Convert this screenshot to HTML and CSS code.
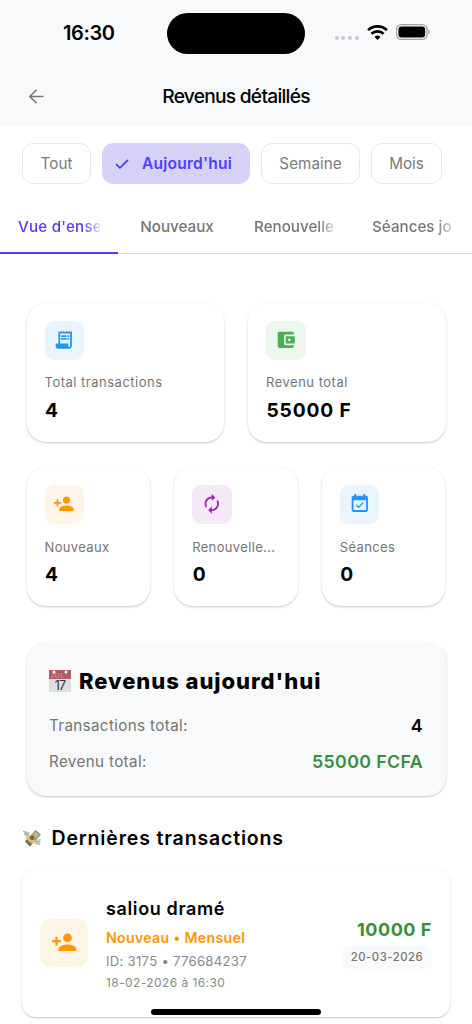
FILE: index.html
```html
<!DOCTYPE html>
<html lang="fr">
<head>
<meta charset="utf-8">
<title>Revenus détaillés</title>
<link rel="stylesheet" href="styles.css">
</head>
<body>
<svg class="defs" width="0" height="0">
  <symbol id="person-add" viewBox="0 0 24 24"><path d="M15 12c2.21 0 4-1.79 4-4s-1.79-4-4-4-4 1.79-4 4 1.79 4 4 4zm-9-2V7H4v3H1v2h3v3h2v-3h3v-2H6zm9 4c-2.67 0-8 1.34-8 4v2h16v-2c0-2.66-5.33-4-8-4z"/></symbol>
</svg>
<div class="screen">
  <header class="header">
    <div class="status">
      <span class="time">16:30</span>
      <span class="island"></span>
      <span class="signals">
        <span class="dots"><i></i><i></i><i></i><i></i></span>
        <svg class="wifi" viewBox="0 0 21 15"><path d="M10.500 15.000l3.000-3.100a4.300 4.300 0 0 0-6.000 0z"/><path class="arc" d="M1.100 5.100a13.500 13.500 0 0 1 18.800 0M4.400 8.800a8.800 8.800 0 0 1 12.200 0"/></svg>
        <svg class="battery" viewBox="0 0 34 16"><rect x=".6" y=".6" width="30.400" height="14.800" rx="4.800" fill="none" stroke="#a3a3a6" stroke-width="1.200"/><rect x="2.400" y="2.500" width="26.800" height="11" rx="3.200"/><path d="M32.200 5.500c2 .6 2 4.400 0 5z" fill="#a3a3a6"/></svg>
      </span>
    </div>
    <div class="appbar">
      <svg class="back" viewBox="0 0 15 15"><path d="M14.500 7.500H1M7.500 .8L.9 7.500l6.600 6.700"/></svg>
      <h1 class="title">Revenus détaillés</h1>
    </div>
  </header>

  <nav class="chips">
    <span class="chip tout">Tout</span>
    <span class="chip active"><svg viewBox="0 0 14 10"><path d="M1 5.200l3.900 3.600L13 1"/></svg><b>Aujourd'hui</b></span>
    <span class="chip semaine">Semaine</span>
    <span class="chip mois">Mois</span>
  </nav>

  <nav class="tabs">
    <span class="tab selected"><span class="fade">Vue d'ense</span></span>
    <span class="tab"><span class="center">Nouveaux</span></span>
    <span class="tab"><span class="fade">Renouvelle</span></span>
    <span class="tab"><span class="fade">Séances jo</span></span>
  </nav>

  <main>
    <section class="grid two">
      <article class="card stat">
        <span class="badge blue"><svg viewBox="0 0 24 24"><path d="M19.500 3.500L18 2l-1.500 1.500L15 2l-1.500 1.500L12 2l-1.500 1.500L9 2 7.500 3.500 6 2v14H3v3c0 1.660 1.340 3 3 3h12c1.660 0 3-1.340 3-3V2l-1.500 1.500zM19 19c0 .55-.45 1-1 1s-1-.45-1-1v-3H8V5h11v14z"/><path d="M9 7h6v2H9zM16 7h2v2h-2zM9 10h6v2H9zM16 10h2v2h-2z"/></svg></span>
        <span class="label">Total transactions</span><strong class="value">4</strong>
      </article>
      <article class="card stat">
        <span class="badge green"><svg viewBox="0 0 24 24"><path d="M21 18v1c0 1.100-.9 2-2 2H5c-1.110 0-2-.9-2-2V5c0-1.100.89-2 2-2h14c1.100 0 2 .9 2 2v1h-9c-1.110 0-2 .9-2 2v8c0 1.100.89 2 2 2h9zm-9-2h10V8H12v8zm4-2.500c-.83 0-1.500-.67-1.500-1.500s.67-1.500 1.500-1.500 1.500.67 1.500 1.500-.67 1.500-1.500 1.500z"/></svg></span>
        <span class="label">Revenu total</span><strong class="value">55000 F</strong>
      </article>
    </section>
    <section class="grid three">
      <article class="card stat">
        <span class="badge orange"><svg><use href="#person-add"/></svg></span>
        <span class="label">Nouveaux</span><strong class="value">4</strong>
      </article>
      <article class="card stat">
        <span class="badge purple"><svg viewBox="0 0 24 24"><path d="M12 6v3l4-4-4-4v3c-4.420 0-8 3.580-8 8 0 1.570.46 3.030 1.240 4.260L6.700 14.800c-.45-.83-.7-1.790-.7-2.800 0-3.310 2.690-6 6-6zm6.760 1.740L17.300 9.200c.44.84.7 1.790.7 2.800 0 3.310-2.690 6-6 6v-3l-4 4 4 4v-3c4.420 0 8-3.580 8-8 0-1.570-.46-3.030-1.240-4.260z"/></svg></span>
        <span class="label">Renouvelle...</span><strong class="value">0</strong>
      </article>
      <article class="card stat">
        <span class="badge blue"><svg viewBox="0 0 24 24"><path d="M16.530 11.060L15.470 10l-4.880 4.880-2.120-2.120-1.060 1.060L10.590 17l5.940-5.940zM19 3h-1V1h-2v2H8V1H6v2H5c-1.110 0-1.990.9-1.990 2L3 19c0 1.100.89 2 2 2h14c1.100 0 2-.9 2-2V5c0-1.100-.9-2-2-2zm0 16H5V8h14v11z"/></svg></span>
        <span class="label">Séances</span><strong class="value">0</strong>
      </article>
    </section>

    <section class="card summary">
      <h2><svg class="calendar" viewBox="0 0 22 22"><path d="M0 0h22v22H0z" fill="#dededf"/><path d="M0 0h22v9H0z" fill="#b05c5f"/><circle cx="5" cy="2" r="1.500" fill="#fff"/><circle cx="17" cy="2" r="1.500" fill="#fff"/><text x="1.500" y="8" font-size="6" fill="#dda6a8">JUL</text><text x="11" y="20" font-size="12.500" text-anchor="middle" fill="#333" letter-spacing="-.8">17</text></svg><span>Revenus aujourd'hui</span></h2>
      <div class="line"><span>Transactions total:</span><b>4</b></div>
      <div class="line"><span class="rev">Revenu total:</span><b class="money">55000 FCFA</b></div>
    </section>

    <h2 class="section-title"><svg class="cash" viewBox="0 0 20 18"><path d="M1 1.500l7 2-1 5-4-1zM12 10l7 0-1 6-5-1z" fill="#d2d3c9"/><path d="M1 2l6 3M2 4.500l5 2M13 12l5 1M13 14l4 1.500" stroke="#999d92" stroke-width=".8"/><path d="M3 12.500L13.500 1l5.500 4.500L8 17.500z" fill="#8b9274"/><path d="M4.800 12.400L13.500 2.700l3.600 2.900-9 10z" fill="#b6bb9d"/><path d="M6.500 6.500l7 5.500-3 3.300-6.800-5.700z" fill="#e5bd61"/><ellipse cx="10.200" cy="8.800" rx="2.400" ry="2.200" fill="#716d44"/><path d="M3 12.500l5 5 2-2.200-5-4.800z" fill="#6f765f"/></svg><span>Dernières transactions</span></h2>

    <article class="card transaction">
      <span class="badge orange big"><svg><use href="#person-add"/></svg></span>
      <div class="details">
        <strong class="name">saliou dramé</strong>
        <span class="kind">Nouveau • Mensuel</span>
        <span class="ident">ID: 3175 • 776684237</span>
        <span class="date">18-02-2026 à 16:30</span>
      </div>
      <div class="amount"><strong>10000 F</strong><span class="due">20-03-2026</span></div>
    </article>
  </main>
  <div class="home-indicator"></div>
</div>
</body>
</html>
```
FILE: styles.css
```css
* { box-sizing: border-box; }
body { margin: 0; background: #fff; font-family: Inter, "Noto Sans", sans-serif; color: #000; }
h1, h2 { margin: 0; }
.defs { position: absolute; }
.screen { position: relative; width: 472px; height: 1024px; overflow: hidden; }
.screen span, .screen strong, .screen b { white-space: nowrap; }

.header { height: 126px; background: #f8f9fb; }
.status { height: 66px; display: grid; grid-template-columns: 167px 138px 167px; align-items: center; }
.time { padding-left: 63px; font-size: 20px; font-weight: 600; letter-spacing: -.4px; }
.island { height: 41px; border-radius: 21px; background: #000; }
.signals { display: flex; align-items: center; padding-left: 29.500px; height: 30px; margin-top: -2px; }
.dots { display: flex; gap: 2.700px; margin: 11px 8px 0 0; }
.dots i { width: 4px; height: 4px; border-radius: 50%; background: #c9cacd; }
.wifi { width: 21px; height: 15px; margin-right: 8px; }
.wifi .arc { fill: none; stroke: #000; stroke-width: 2.700; }
.battery { width: 34px; height: 16px; }
.appbar { height: 60px; display: grid; grid-template-columns: 28px 416px 28px; align-items: center; }
.back { width: 15px; height: 15px; grid-column: 2; grid-row: 1; margin-left: 1px; }
.back path { fill: none; stroke: #757575; stroke-width: 1.600; }
.title { grid-column: 2; grid-row: 1; text-align: center; font-size: 19.200px; font-weight: 450; letter-spacing: -.75px; }

.chips { display: flex; gap: 11px; padding: 17px 22px 0; height: 76px; }
.chip { height: 41px; border: 1px solid #e8e8e8; border-radius: 11px; display: flex; align-items: center; justify-content: center; font-size: 15.200px; color: #7a7a7a; letter-spacing: .05px; }
.tout { width: 69px; }
.semaine { width: 99px; }
.mois { width: 71px; }
.active { width: 148px; border-color: #d6d1f7; background: #d6d1f7; color: #4f3dff; justify-content: flex-start; padding-left: 12px; gap: 13px; font-size: 15.600px; letter-spacing: .2px; }
.active svg { width: 14px; height: 10px; }
.active path { fill: none; stroke: #4f3dff; stroke-width: 1.800; }
.active b { font-weight: 600; }

.tabs { display: grid; grid-template-columns: repeat(4, 118px); height: 52px; border-bottom: 1px solid #dcdcdc; font-size: 15.200px; font-weight: 500; color: #757575; letter-spacing: 0; }
.tab { height: 52px; padding: 15px 18px 0; line-height: 20px; border-bottom: 2px solid transparent; }
.tab span { display: block; width: 82px; }
.fade { mask-image: linear-gradient(90deg, #000 78%, rgba(0,0,0,.2) 100%); }
.center { text-align: center; }
.selected { color: #4f3dff; border-bottom-color: #4f3dff; }
.selected .fade { letter-spacing: .2px; }

main { padding: 48.500px 22px 0; }
.card { background: #fff; border-radius: 19px; box-shadow: 0 1px 2.500px rgba(0,0,0,.2), 0 1px 1px rgba(0,0,0,.04); }
.grid { display: grid; gap: 24px; margin: 0 4.500px; }
.two { grid-template-columns: 1fr 1fr; margin-bottom: 24.500px; }
.three { grid-template-columns: 1fr 1fr 1fr; margin-bottom: 36px; }
.stat { height: 139.500px; padding: 18px; display: flex; flex-direction: column; align-items: flex-start; }
.badge { width: 39.500px; height: 39.500px; border-radius: 9px; display: flex; align-items: center; justify-content: center; flex: none; fill: currentColor; }
.badge svg { width: 21.600px; height: 21.600px; }
.blue { color: #2196f3; background: #e8f4fe; }
.green { color: #4caf50; background: #edf7ed; }
.orange { color: #ff9800; background: #fff4e5; }
.purple { color: #9c27b0; background: #f5e9f7; }
.label { font-size: 13px; line-height: 18px; margin-top: 13.500px; color: #757575; letter-spacing: .5px; }
.three .label { letter-spacing: .35px; }
.value { font-size: 19.200px; line-height: 24px; margin-top: 6px; padding-left: .5px; font-weight: 700; letter-spacing: .85px; }
.two .label { margin-top: 12.500px; }
.two .value { margin-top: 7px; }

.summary { height: 154px; margin: 0 4.500px; padding: 25px 22.500px 0; background: #f8f9fb; }
.summary h2 { display: flex; align-items: center; gap: 8px; height: 28px; font-size: 22px; font-weight: 850; letter-spacing: .95px; }
.calendar { width: 22px; height: 22px; }
.calendar text { font-weight: 400; }
.line { display: flex; justify-content: space-between; align-items: center; height: 36px; font-size: 15.200px; color: #757575; letter-spacing: .36px; }
.summary h2 + .line { margin-top: 12.500px; }
.line b { font-size: 17.800px; font-weight: 600; color: #000; }
.line .money { color: #388e3c; }

.section-title { display: flex; align-items: center; gap: 9.500px; height: 28px; margin: 28px 0 16px; font-size: 19.500px; font-weight: 600; letter-spacing: .84px; }
.cash { width: 20px; height: 18px; }
.transaction { height: 149px; border-radius: 14px; padding: 0 18px; display: flex; align-items: center; }
.big { width: 48px; height: 48px; border-radius: 11px; }
.big svg { width: 26.400px; height: 26.400px; }
.details { display: flex; flex-direction: column; margin: 3px 0 0 18px; }
.name { font-size: 18px; line-height: 24px; font-weight: 600; letter-spacing: .63px; margin-bottom: 6px; }
.kind { font-size: 14.200px; line-height: 22px; font-weight: 600; color: #ff9800; letter-spacing: .27px; }
.ident { font-size: 13.200px; line-height: 24px; color: #8a8a8a; letter-spacing: .25px; }
.date { font-size: 12px; line-height: 19px; color: #8a8a8a; letter-spacing: .42px; }
.amount { margin: 1px 0 0 auto; display: flex; flex-direction: column; align-items: flex-end; gap: 4px; }
.amount strong { font-size: 18px; line-height: 24px; font-weight: 700; color: #388e3c; letter-spacing: .55px; }
.due { width: 90px; height: 23px; border-radius: 7px; background: #f8f9fb; display: flex; align-items: center; justify-content: center; font-size: 11.300px; font-weight: 500; color: #757575; letter-spacing: .55px; }
.home-indicator { position: absolute; left: 151px; top: 1009px; width: 170px; height: 6px; border-radius: 3px; background: #000; }
```
